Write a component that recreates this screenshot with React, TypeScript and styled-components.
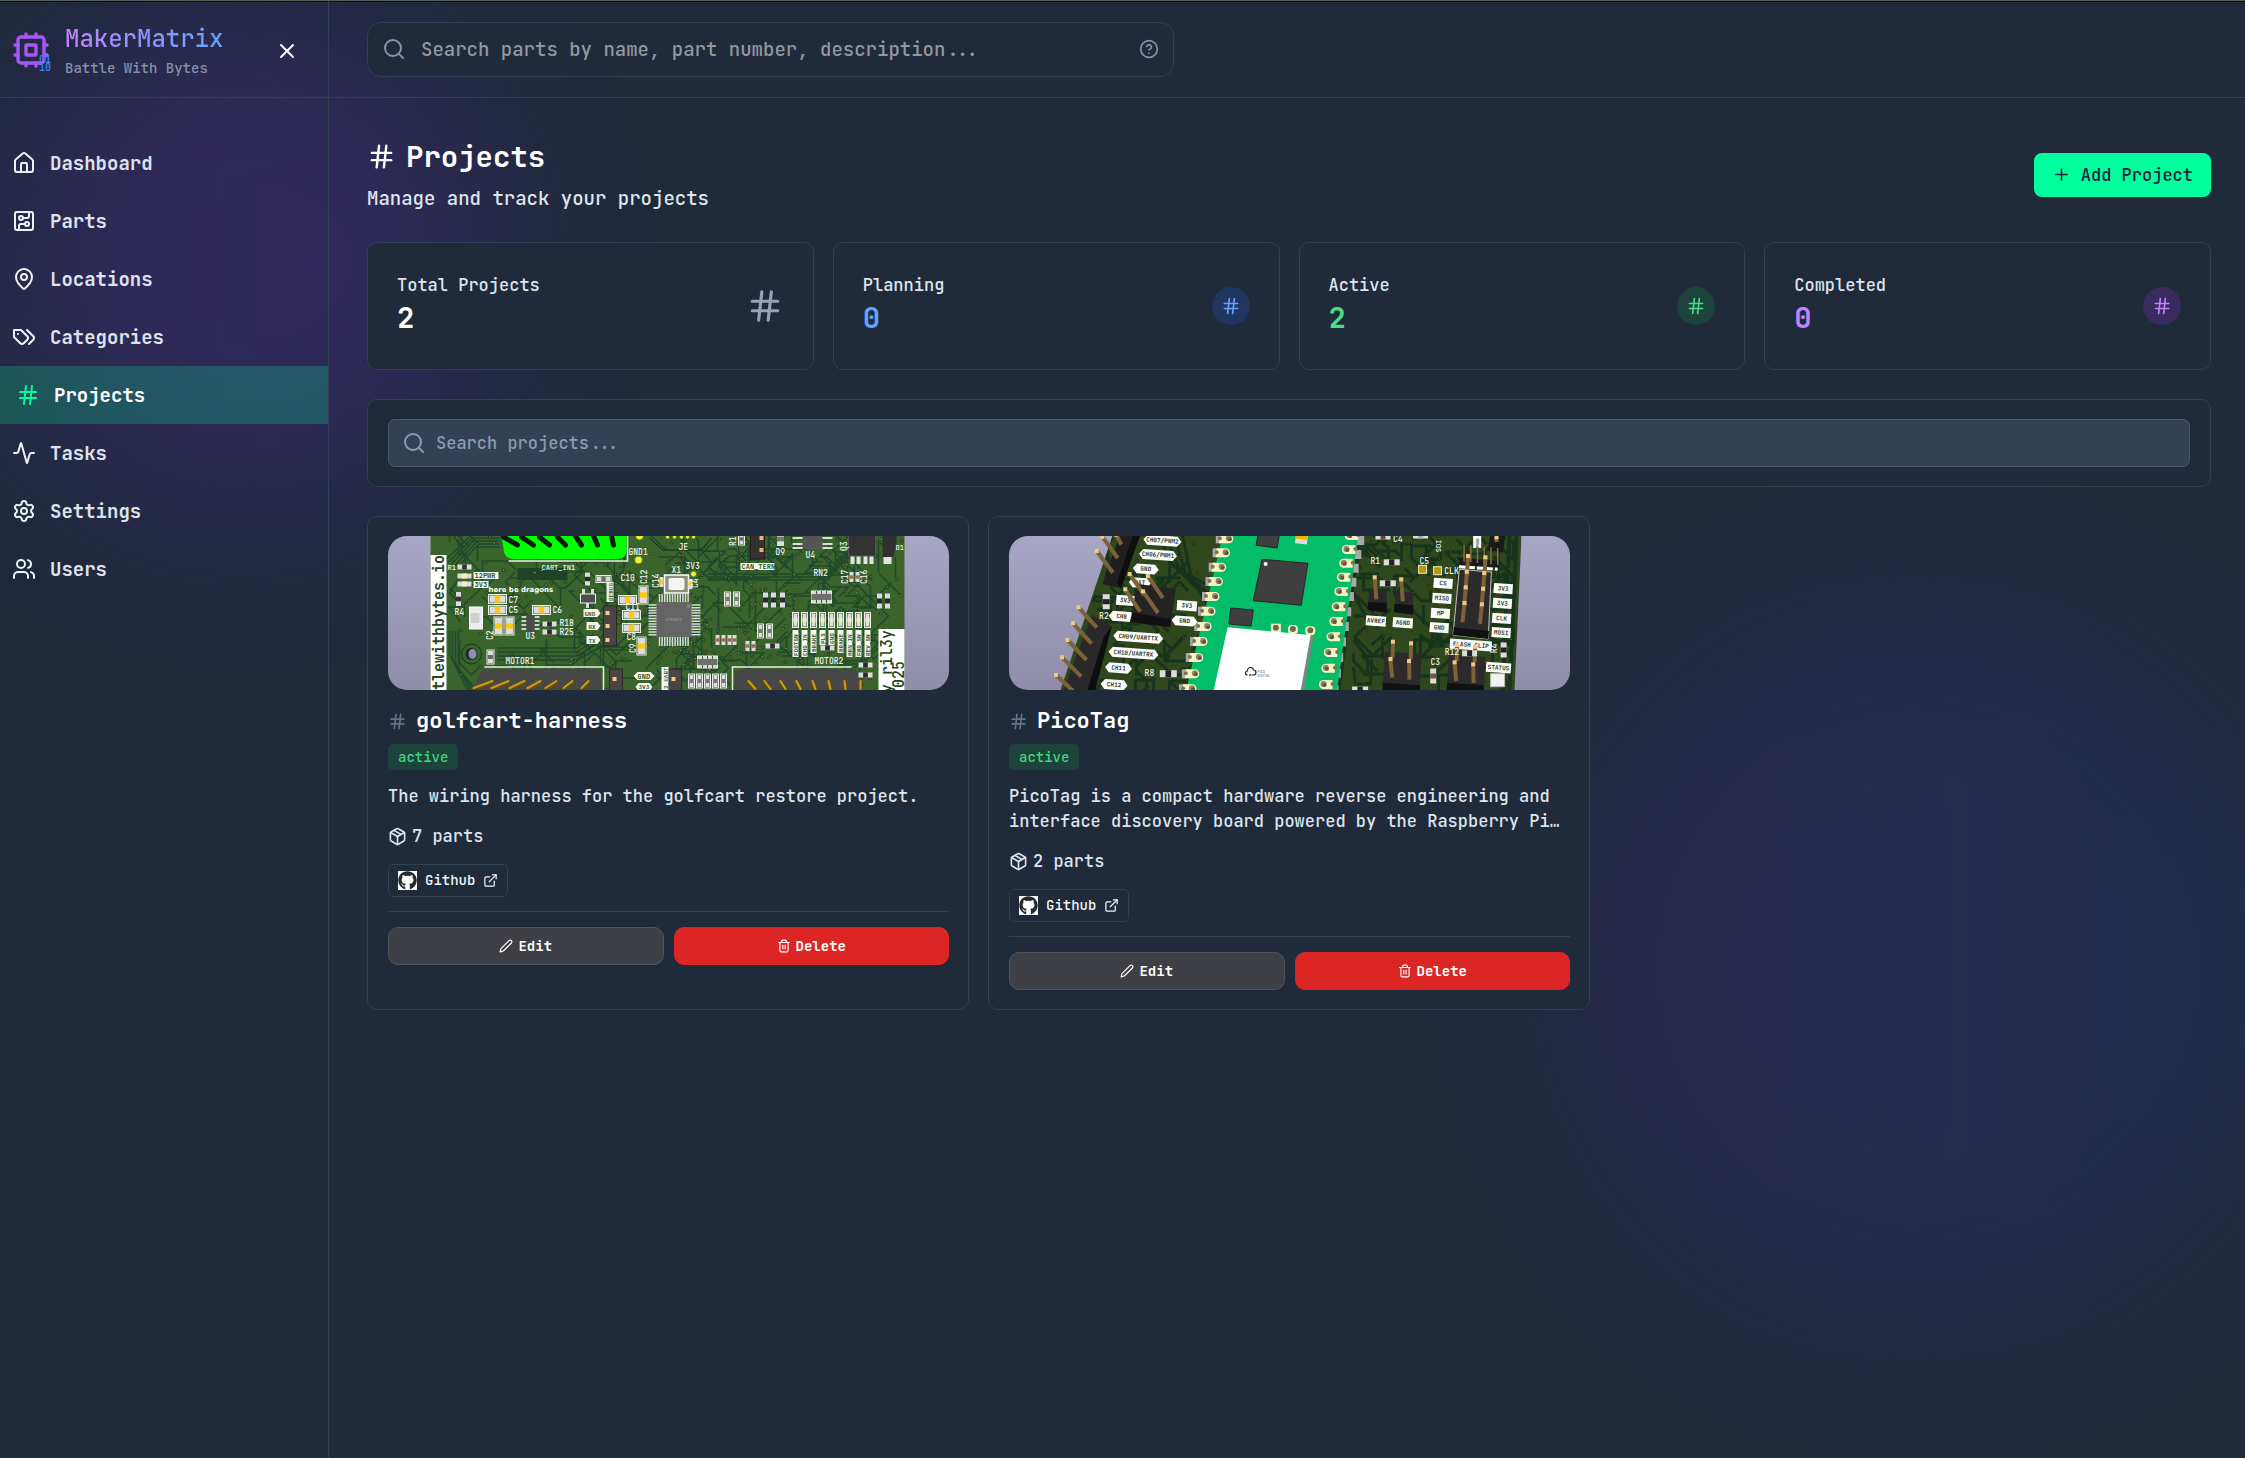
import React from "react";
import styled, { createGlobalStyle } from "styled-components";
import {
  Activity,
  CircuitBoard,
  ExternalLink,
  Hash,
  HelpCircle,
  House,
  MapPin,
  Package,
  Pen,
  Plus,
  Search,
  Settings,
  Trash2,
  Users,
  X,
} from "lucide-react";
import { FaGithub } from "react-icons/fa";

const mono = `"JetBrains Mono", "DejaVu Sans Mono", "Liberation Mono", monospace`;

const GlobalStyle = createGlobalStyle`
  *, *::before, *::after { box-sizing: border-box; }
  body {
    margin: 0;
    background: #1f2a3b;
    color: #dfe5ec;
    font-family: ${mono};
    font-size: 17px;
    font-weight: 500;
    line-height: 25px;
  }
  h1, h2, p, dl, dd, dt, ul { margin: 0; padding: 0; }
  button, input { font-family: inherit; font-weight: inherit; }
  button { cursor: pointer; }
  svg { flex: none; display: block; }
`;

/* ---------- page frame ---------- */

const Shell = styled.div`
  position: relative;
  isolation: isolate;
  display: grid;
  grid-template-columns: 329px minmax(0, 1fr);
  min-height: 100vh;
  border-top: 1px solid #5a5a56;
  box-shadow: inset 0 1px 0 #05080c;
  overflow: hidden;
`;

const Glow = styled.div<{ $size: number; $from: string; $to: string }>`
  position: absolute;
  z-index: -1;
  width: ${(p) => p.$size}px;
  height: ${(p) => p.$size}px;
  border-radius: 50%;
  background: linear-gradient(90deg, ${(p) => p.$from}, ${(p) => p.$to});
  filter: blur(77px);
`;

const TopGlow = styled(Glow)`
  top: 10px;
  left: -10px;
`;

const BottomGlow = styled(Glow)`
  right: -20px;
  bottom: 150px;
`;

const Sidebar = styled.aside`
  border-right: 1px solid #2f4152;
`;

const Brand = styled.div`
  display: flex;
  align-items: center;
  height: 97px;
  padding: 3px 29px 0 12px;
  border-bottom: 1px solid #2f4152;
`;

const LogoMark = styled.svg`
  width: 42px;
  height: 42px;
  overflow: visible;
`;

const BrandText = styled.div`
  flex: 1;
  padding-left: 11px;
`;

const BrandName = styled.div`
  width: max-content;
  font-size: 24px;
  line-height: 34px;
  color: transparent;
  background: linear-gradient(90deg, #c084fc, #60a5fa);
  background-clip: text;
  -webkit-background-clip: text;
`;

const BrandTag = styled.div`
  font-size: 14px;
  line-height: 24px;
  color: #8492aa;
`;

const IconButton = styled.button`
  display: flex;
  padding: 0;
  border: 0;
  background: none;
  color: ${(p) => p.color || "#fff"};
`;

const Nav = styled.nav`
  display: grid;
  padding-top: 36px;
`;

const NavLink = styled.a<{ $active?: boolean }>`
  display: flex;
  align-items: center;
  gap: 14px;
  height: 58px;
  padding-left: ${(p) => (p.$active ? 16 : 12)}px;
  font-size: 19px;
  font-weight: 600;
  text-decoration: none;
  color: ${(p) => (p.$active ? "#fff" : "#dde3ec")};
  background: ${(p) => (p.$active ? "rgba(0, 255, 157, 0.21)" : "none")};
  svg { color: ${(p) => (p.$active ? "#00ff9d" : "#eef2f7")}; }
`;

const TopBar = styled.header`
  display: flex;
  align-items: center;
  height: 97px;
  padding: 0 38px;
  border-bottom: 1px solid #2f4152;
`;

const GlobalSearch = styled.label`
  display: flex;
  align-items: center;
  gap: 15px;
  width: 807px;
  height: 55px;
  padding: 0 14px;
  border: 1px solid #2f4152;
  border-radius: 14px;
  background: #1f2a3b;
  color: #8595aa;
`;

const TextInput = styled.input<{ $size: number; $hint: string }>`
  flex: 1;
  min-width: 0;
  padding: 0;
  border: 0;
  outline: 0;
  background: none;
  color: #fff;
  font-size: ${(p) => p.$size}px;
  &::placeholder { color: ${(p) => p.$hint}; opacity: 1; }
`;

const Content = styled.main`
  display: grid;
  gap: 29px;
  padding: 38px 34px 38px 38px;
`;

/* ---------- page header ---------- */

const PageHead = styled.div`
  display: flex;
  align-items: center;
  justify-content: space-between;
`;

const PageTitle = styled.h1`
  display: flex;
  align-items: center;
  gap: 10px;
  font-size: 29px;
  line-height: 41px;
  font-weight: 600;
  color: #fff;
`;

const PageLead = styled.p`
  margin-top: 8px;
  font-size: 19px;
  line-height: 28px;
`;

const AddButton = styled.button`
  display: flex;
  align-items: center;
  gap: 10px;
  height: 44px;
  padding: 0 18px;
  border: 0;
  border-radius: 8px;
  background: #00ff9d;
  color: #16243a;
  font-size: 17px;
`;

/* ---------- panels ---------- */

const Panel = styled.section`
  border: 1px solid #2f4152;
  border-radius: 10px;
  background: #1f2a3b;
`;

const Stats = styled.div`
  display: grid;
  grid-template-columns: repeat(4, minmax(0, 1fr));
  gap: 19px;
`;

const StatPanel = styled(Panel)`
  display: flex;
  align-items: center;
  justify-content: space-between;
  padding: 30px 29px;
`;

const StatLabel = styled.dt`
  line-height: 24px;
`;

const StatValue = styled.dd<{ $color: string }>`
  font-size: 29px;
  line-height: 42px;
  font-weight: 700;
  color: ${(p) => p.$color};
`;

const StatBadge = styled.div<{ $color: string; $bg: string }>`
  display: grid;
  place-items: center;
  width: 38px;
  height: 38px;
  border-radius: 50%;
  color: ${(p) => p.$color};
  background: ${(p) => p.$bg};
`;

const FilterPanel = styled(Panel)`
  padding: 19px 20px;
`;

const FilterBox = styled.label`
  display: flex;
  align-items: center;
  gap: 10px;
  height: 48px;
  padding: 0 13px;
  border: 1px solid #465a6b;
  border-radius: 7px;
  background: #334154;
  color: #8b9bb1;
`;

/* ---------- project cards ---------- */

const Projects = styled.div`
  display: grid;
  grid-template-columns: repeat(3, minmax(0, 1fr));
  gap: 19px;
`;

const Card = styled(Panel)`
  padding: 19px 19px 19px 20px;
`;

const Cover = styled.svg`
  width: 100%;
  height: 154px;
  border-radius: 19px;
`;

const CardTitle = styled.h2`
  display: flex;
  align-items: center;
  gap: 9px;
  margin-top: 14px;
  font-size: 22px;
  line-height: 34px;
  font-weight: 600;
  color: #fff;
  svg { color: #64758b; }
`;

const Status = styled.span`
  display: block;
  width: max-content;
  margin-top: 6px;
  padding: 0 10px;
  border-radius: 5px;
  font-size: 14px;
  line-height: 26px;
  color: #43d67b;
  background: #1d433d;
`;

const Summary = styled.p`
  display: -webkit-box;
  -webkit-box-orient: vertical;
  -webkit-line-clamp: 2;
  overflow: hidden;
  margin-top: 14px;
`;

const PartCount = styled.div`
  display: flex;
  align-items: center;
  gap: 5px;
  margin-top: 14px;
  line-height: 26px;
`;

const LinkChip = styled.a`
  display: flex;
  align-items: center;
  gap: 8px;
  width: max-content;
  height: 33px;
  margin-top: 15px;
  padding: 0 9px;
  border: 1px solid #2f4152;
  border-radius: 5px;
  font-size: 14px;
  color: #f4f6f9;
  text-decoration: none;
`;

const Favicon = styled.span`
  display: grid;
  place-items: center;
  width: 19px;
  height: 19px;
  background: #fff;
  color: #24292e;
`;

const Actions = styled.div`
  display: grid;
  grid-template-columns: 1fr 1fr;
  gap: 10px;
  margin-top: 14px;
  padding-top: 15px;
  border-top: 1px solid #2f4152;
`;

const ActionButton = styled.button<{ $danger?: boolean }>`
  display: flex;
  align-items: center;
  justify-content: center;
  gap: 5px;
  height: 38px;
  padding: 0;
  border: 1px solid ${(p) => (p.$danger ? "#dc2626" : "#52525b")};
  border-radius: 10px;
  background: ${(p) => (p.$danger ? "#dc2626" : "#3f3f46")};
  color: #fff;
  font-size: 14px;
  font-weight: 700;
`;

/* ---------- board artwork ---------- */

type Pt = [number, number];

const range = (n: number) => Array.from({ length: n }, (_, i) => i);

// Small repeatable generator, so that traces and vias land alike on each paint.
const seeded = (seed: number) => () => {
  seed = (seed * 16807) % 2147483647;
  return seed / 2147483647;
};

const Sky = ({ id }: { id: string }) => (
  <>
    <defs>
      <linearGradient id={id} x1="0" y1="0" x2="0" y2="1">
        <stop offset="0" stopColor="#a7a6c4" />
        <stop offset="1" stopColor="#8f8da9" />
      </linearGradient>
    </defs>
    <rect width="562" height="154" fill={`url(#${id})`} />
  </>
);

const Silk = ({ x, y, s = 8, up, children }: { x: number; y: number; s?: number; up?: boolean; children: string }) => (
  <text
    x={x}
    y={y}
    fontFamily={mono}
    fontSize={s}
    fill="#f2f5ee"
    transform={up ? `rotate(-90 ${x} ${y})` : undefined}
  >
    {children}
  </text>
);

// Two-terminal part centred on x, y: w > h lies flat, h > w stands.
const Chip2 = ({ x, y, w, h, mid, frame }: { x: number; y: number; w: number; h: number; mid: string; frame?: boolean }) => {
  const flat = w > h;
  return (
    <g>
      {frame && <rect x={x - w / 2 - 1} y={y - h / 2 - 1} width={w + 2} height={h + 2} fill="none" stroke="#e9efe6" />}
      <rect x={x - w / 2} y={y - h / 2} width={w} height={h} fill="#dcdcdc" />
      <rect
        x={flat ? x - w / 6 : x - w / 2}
        y={flat ? y - h / 2 : y - h / 6}
        width={flat ? w / 3 : w}
        height={flat ? h : h / 3}
        fill={mid}
      />
    </g>
  );
};

const makeTraces = (seed: number, count: number, x0: number, x1: number) => {
  const next = seeded(seed);
  return range(count).map(() => {
    let x = x0 + next() * (x1 - x0);
    let y = next() * 154;
    let d = `M${x.toFixed(0)} ${y.toFixed(0)}`;
    for (let i = 0; i < 4; i++) {
      const len = 5 + next() * 22;
      const dir = Math.floor(next() * 8) * (Math.PI / 4);
      x = Math.min(x1, Math.max(x0, x + Math.cos(dir) * len));
      y += Math.sin(dir) * len;
      d += `L${x.toFixed(0)} ${y.toFixed(0)}`;
    }
    return d;
  });
};

const makeVias = (seed: number, count: number, x0: number, x1: number): Pt[] => {
  const next = seeded(seed);
  return range(count).map(() => [x0 + next() * (x1 - x0), next() * 154]);
};

const harnessTraces = makeTraces(71, 170, 62, 515);
const harnessVias = makeVias(907, 230, 70, 515);
const denseVias = makeVias(311, 130, 270, 400);

const HarnessBoard = () => (
  <Cover viewBox="0 0 562 154" preserveAspectRatio="xMidYMid slice" role="img" aria-label="golfcart-harness board">
    <Sky id="sky-harness" />
    <rect x="43" width="474" height="154" fill="#3a642c" />
    <g fill="none" stroke="#1f4a2b" strokeWidth="1.5">
      {harnessTraces.map((d, i) => (
        <path key={i} d={d} />
      ))}
      {range(5).map((i) => (
        <path key={i} d={`M${58 + i * 3} ${24 + i * 2}L${84 + i} ${i * 3 - 1}H112`} />
      ))}
      {range(4).map((i) => (
        <path key={i} d={`M${62 + i * 3} 95V${118 + i * 5}L${80 + i * 3} 154`} />
      ))}
      {range(4).map((i) => (
        <path key={i} d={`M110 ${112 + i * 4}H190L${206 + i * 3} ${98 + i * 4}`} />
      ))}
      {range(3).map((i) => (
        <path key={i} d={`M320 ${44 - i * 3}H440L${470 - i * 3} ${10 + i}`} />
      ))}
    </g>
    <rect x="130" y="32" width="50" height="12" fill="#1d4428" />
    {[...harnessVias, ...denseVias].map(([x, y], i) => (
      <circle key={i} cx={x} cy={y} r="1.4" fill={i % 3 ? "#59702f" : "#7d8148"} stroke="#173a22" strokeWidth="0.8" />
    ))}

    <rect x="43" y="19" width="16" height="135" fill="#fff" />
    <text x="56" y="154" fontFamily={mono} fontSize="15" fontWeight="700" fill="#24471f" transform="rotate(-90 56 154)">
      tlewithbytes.io
    </text>
    <rect x="491" y="93" width="26" height="61" fill="#fff" />
    <text x="504" y="157" fontFamily={mono} fontSize="15" fill="#24471f" transform="rotate(-90 504 157)">
      y ril3y
    </text>
    <text x="516" y="152" fontFamily={mono} fontSize="15" fill="#24471f" transform="rotate(-90 516 152)">
      025
    </text>

    <path d="M121 25H240V0" fill="none" stroke="#e9efe6" strokeWidth="1.5" />
    <path d="M114 0H239V14Q239 23 230 23H127Q116 23 116 12Z" fill="#00ff00" />
    <g stroke="#0a1c08" strokeWidth="5" strokeLinecap="round">
      {range(7).map((i) => (
        <path key={i} d={`M${116 + i * 18} ${i < 4 ? 1 : 0}L${130 + i * 16} 9`} />
      ))}
    </g>
    <Silk x={154} y={34} s={7}>CART_IN1</Silk>
    <Silk x={241} y={19}>GND1</Silk>
    <Silk x={298} y={33}>3V3</Silk>
    {[[252, 0, 4], [251, 24, 4], [306, 38, 3], [280, 1, 2], [287, 1, 2], [294, 1, 2], [300, 1, 2], [306, 1, 2]].map(([x, y, r]) => (
      <circle key={`${x}-${y}`} cx={x} cy={y} r={r} fill="#f4f22d" stroke="#4b7a2c" />
    ))}
    <path d="M262 2L275 14H314L324 2" fill="none" stroke="#14241a" />
    <Silk x={291} y={14}>JE</Silk>

    <Silk x={60} y={34} s={7}>R1</Silk>
    <Chip2 x={77} y={31} w={14} h={5} mid="#343434" />
    <Chip2 x={77} y={40} w={14} h={5} mid="#f4efc9" />
    <Chip2 x={77} y={48} w={14} h={5} mid="#f4efc9" />
    <rect x="86" y="36" width="25" height="7" fill="#f4f6f0" />
    <rect x="86" y="45" width="15" height="7" fill="#f4f6f0" />
    <g fontFamily={mono} fontSize="7" fontWeight="700" fill="#2d5225">
      <text x="87" y="42">12PWR</text>
      <text x="87" y="51">3V3</text>
    </g>
    <text x="101" y="56" fontFamily='"DejaVu Sans", sans-serif' fontSize="7" fontWeight="700" fill="#fff">
      here be dragons
    </text>
    <Chip2 x={71} y={63} w={5} h={14} mid="#343434" />
    <Silk x={67} y={79}>R4</Silk>
    <rect x="82" y="71" width="13" height="22" fill="#ececec" stroke="#fff" />
    <rect x="83" y="77" width="9" height="10" fill="#cfcfcf" />

    {([[110, 63], [110, 74], [154, 74], [240, 64], [244, 79], [244, 92]] as Pt[]).map(([x, y]) => (
      <Chip2 key={`${x}-${y}`} x={x} y={y} w={16} h={7} mid="#ffc814" frame />
    ))}
    {([[111, 90], [122, 90], [256, 59], [254, 110]] as Pt[]).map(([x, y]) => (
      <Chip2 key={`${x}-${y}`} x={x} y={y} w={7} h={16} mid="#ffc814" frame />
    ))}
    <Silk x={121} y={67}>C7</Silk>
    <Silk x={121} y={77}>C5</Silk>
    <Silk x={165} y={77}>C6</Silk>
    <Silk x={105} y={104} up>C2</Silk>
    {range(4).map((i) => (
      <g key={i} fill="#cfcfcf">
        <rect x="134" y={80 + i * 4} width="5" height="2" />
        <rect x="147" y={80 + i * 4} width="5" height="2" />
      </g>
    ))}
    <rect x="139" y="79" width="8" height="17" fill="#4b4b4b" />
    <Silk x={138} y={103}>U3</Silk>
    <Chip2 x={162} y={88} w={14} h={5} mid="#2a2a2a" />
    <Chip2 x={162} y={96} w={14} h={5} mid="#2a2a2a" />
    <Silk x={172} y={90}>R18</Silk>
    <Silk x={172} y={99}>R25</Silk>

    <circle cx="84" cy="118" r="10" fill="none" stroke="#16351d" />
    <circle cx="84" cy="118" r="6" fill="#1b2430" />
    <ellipse cx="85" cy="118" rx="4" ry="5" fill="#9290b0" />
    <Chip2 x={103} y={121} w={5} h={12} mid="#6a6a6a" frame />
    <Silk x={118} y={128}>MOTOR1</Silk>
    <Silk x={427} y={128}>MOTOR2</Silk>
    <path d="M97 131H216V154M345 154V131H464" fill="none" stroke="#e9efe6" strokeWidth="1.5" />
    <path d="M86 154L92 138Q94 133 101 133H206Q214 133 214 142V154Z" fill="#474747" />
    <path d="M347 154V142Q348 133 357 133H463Q470 133 472 140L476 154Z" fill="#474747" />
    <g stroke="#6b4d05" strokeWidth="4" strokeLinecap="round">
      {range(7).map((i) => (
        <path key={i} d={`M${86 + i * 18} 153L${105 + i * 16} 146`} />
      ))}
      {range(8).map((i) => (
        <path key={i} d={`M${361 + i * 16} 146L${368 + i * 15} 153`} />
      ))}
    </g>
    <g stroke="#c99b1d" strokeWidth="2" strokeLinecap="round">
      {range(7).map((i) => (
        <path key={i} d={`M${86 + i * 18} 152L${105 + i * 16} 145`} />
      ))}
      {range(8).map((i) => (
        <path key={i} d={`M${361 + i * 16} 145L${368 + i * 15} 153`} />
      ))}
    </g>

    <Chip2 x={200} y={43} w={5} h={13} mid="#2a2a2a" />
    <Chip2 x={216} y={43} w={13} h={5} mid="#6a6a6a" frame />
    <rect x="193" y="58" width="15" height="9" fill="#4e4e4e" stroke="#e9efe6" />
    <path d="M196 58v-5M205 58v-5M200 67v5" stroke="#dcdcdc" strokeWidth="3" />
    <Silk x={233} y={45}>C10</Silk>
    <Silk x={238} y={74}>C11</Silk>
    <Silk x={239} y={104}>C8</Silk>
    <Silk x={259} y={48} up>C12</Silk>
    <Silk x={248} y={117} up>C9</Silk>
    <rect x="219" y="46" width="7" height="20" fill="#eef1ea" />
    <text x="225" y="65" fontFamily={mono} fontSize="6" fill="#2d5225" transform="rotate(-90 225 65)">
      DEBUG
    </text>
    <rect x="216" y="70" width="13" height="40" fill="#4b4344" stroke="#2b2627" />
    {[77, 90, 104].map((y, i) => (
      <g key={y}>
        <rect x="218" y={y - 2} width="4" height="4" fill="#f0cf8e" />
        <path d={`M${i ? 199 : 196} ${y - 4}H210L213 ${y}L210 ${y + 4}H${i ? 199 : 196}Z`} fill="#f4f6f0" />
        <text x={i ? 201 : 197} y={y + 3} fontFamily={mono} fontSize="6" fontWeight="700" fill="#2d5225">
          {["GND", "RX", "TX"][i]}
        </text>
      </g>
    ))}

    <g stroke="#d9dcd8" strokeWidth="1.5">
      {range(12).map((i) => (
        <path key={i} d={`M${272 + i * 2.6} 58v52M261 ${69 + i * 2.7}h52`} />
      ))}
    </g>
    <rect x="269" y="66" width="35" height="35" fill="#656565" />
    <circle cx="301" cy="70" r="1.5" fill="#8f8f8f" />
    <text x="278" y="85" fontFamily={mono} fontSize="3" fill="#999">
      ATMEGA328
    </text>
    <rect x="277" y="39" width="24" height="18" fill="#8f8f80" stroke="#fff" strokeWidth="1.5" />
    <rect x="281" y="42" width="16" height="12" rx="2" fill="#f4f4f2" />
    <Silk x={284} y={37}>X1</Silk>
    <Chip2 x={303} y={48} w={4} h={10} mid="#ffc814" />
    <Chip2 x={274} y={46} w={4} h={10} mid="#ffc814" />
    <Silk x={310} y={52} up>C4</Silk>
    <Silk x={271} y={52} up>C14</Silk>

    <Silk x={348} y={10} up>R1</Silk>
    <Chip2 x={354} y={3} w={4} h={10} mid="#6a6a6a" frame />
    <rect x="363" y="-2" width="14" height="25" fill="#383132" stroke="#221d1e" />
    <rect x="372" y="0" width="4" height="4" fill="#f0b56a" />
    <rect x="372" y="12" width="4" height="4" fill="#f0b56a" />
    <Chip2 x={393} y={3} w={7} h={14} mid="#777" />
    <Silk x={388} y={19}>D9</Silk>
    <path d="M405 2h40M405 8h40M405 12h40" stroke="#dcdcdc" strokeWidth="2" />
    <rect x="415" y="-2" width="20" height="15" fill="#555" />
    <Silk x={418} y={22}>U4</Silk>
    <path d="M465 28v-8M471 28v-8M478 28v-8M484 28v-8" stroke="#e2e2e2" strokeWidth="4" />
    <rect x="461" y="-2" width="27" height="22" fill="#333" stroke="#555" />
    <Silk x={459} y={15} up>Q3</Silk>
    <rect x="496" y="20" width="8" height="8" fill="#e2e2e2" />
    <path d="M495 0V21H505L509 12V0Z" fill="#303030" />
    <Silk x={508} y={14} s={7}>D1</Silk>
    <rect x="353" y="27" width="34" height="7" fill="#f4f6f0" />
    <text x="354" y="33" fontFamily={mono} fontSize="7" fontWeight="700" fill="#2d5225">
      CAN_TERN
    </text>
    <Silk x={426} y={40}>RN2</Silk>
    <Silk x={460} y={48} up>C17</Silk>
    <Silk x={479} y={48} up>C16</Silk>
    {([[464, 41], [470, 41], [330, 104], [336, 104], [342, 104], [347, 104], [360, 110], [366, 110]] as Pt[]).map(([x, y]) => (
      <Chip2 key={`${x}-${y}`} x={x} y={y} w={4} h={10} mid="#9a6a5a" />
    ))}
    {([[424, 55], [310, 120]] as Pt[]).map(([x, y]) => (
      <g key={x}>
        <rect x={x} y={y} width="20" height="12" fill="#d5d8d4" stroke="#e9efe6" />
        <rect x={x} y={y + 3} width="20" height="6" fill="#6f6f6f" />
        <path
          d={`M${x + 5} ${y}v3M${x + 10} ${y}v3M${x + 15} ${y}v3M${x + 5} ${y + 9}v3M${x + 10} ${y + 9}v3M${x + 15} ${y + 9}v3`}
          stroke="#3a642c"
        />
      </g>
    ))}
    {([[340, 63], [349, 63], [373, 95], [382, 95], [304, 145], [312, 145], [320, 145], [328, 145], [336, 145]] as Pt[]).map(([x, y]) => (
      <Chip2 key={`${x}-${y}`} x={x} y={y} w={4} h={12} mid="#777" frame />
    ))}
    {([[378, 64], [386, 64], [395, 64], [492, 65], [500, 65]] as Pt[]).map(([x, y]) => (
      <Chip2 key={`${x}-${y}`} x={x} y={y} w={5} h={15} mid="#2a2a2a" />
    ))}
    {([[385, 110], [440, 112], [478, 129], [478, 139]] as Pt[]).map(([x, y]) => (
      <Chip2 key={`${x}-${y}`} x={x} y={y} w={14} h={5} mid="#2a2a2a" />
    ))}
    {["FOOTSW", "CHG_IN", "BRAKE", "PLS", "GND", "BRAKE", "HRN_IN", "FWD_SW", "REV_SW"].map((t, i) => {
      const x = 408 + i * 9;
      const len = t.length * 4 + 3;
      return (
        <g key={i}>
          <Chip2 x={x} y={84} w={4} h={13} mid="#f1ecd0" frame />
          <rect x={x - 3} y="94" width="6" height={len} fill="#f4f6f0" />
          <text
            x={x + 2}
            y={93 + len}
            fontFamily={mono}
            fontSize="6"
            fontWeight="700"
            fill="#2d5225"
            transform={`rotate(-90 ${x + 2} ${93 + len})`}
          >
            {t}
          </text>
        </g>
      );
    })}
    {[222, 281].map((x) => (
      <g key={x}>
        <rect x={x} y="133" width="13" height="24" fill="#4b4344" stroke="#2b2627" />
        <rect x={x + 3} y="141" width="4" height="4" fill="#f0cf8e" />
      </g>
    ))}
    <path d="M250 136H263L267 140L263 144H250L246 140Z" fill="#f4f6f0" />
    <text x="250" y="143" fontFamily={mono} fontSize="7" fontWeight="700" fill="#2d5225">GND</text>
    <path d="M251 147H262L265 151L262 155H251L248 151Z" fill="#f4f6f0" />
    <text x="251" y="153" fontFamily={mono} fontSize="6" fontWeight="700" fill="#2d5225">3V3</text>
    <rect x="274" y="131" width="7" height="23" fill="#f4f6f0" />
    <text x="280" y="153" fontFamily={mono} fontSize="6" fill="#2d5225" transform="rotate(-90 280 153)">
      2_UART
    </text>
  </Cover>
);

// The tag board is drawn on a 1568 x 540 sheet; these bring its points to the cover.
const sx = (x: number) => Math.round((x * 0.3954 - 28) * 10) / 10;
const sy = (y: number) => Math.round((y / 3 - 16) * 10) / 10;
const poly = (pts: Pt[]) => pts.map(([x, y]) => `${sx(x)},${sy(y)}`).join(" ");

const Pin = ({ a, b }: { a: Pt; b: Pt }) => (
  <g>
    <path d={`M${sx(a[0])} ${sy(a[1])}L${sx(b[0])} ${sy(b[1])}`} stroke="#7c6238" strokeWidth="4" />
    <rect x={sx(a[0]) - 2} y={sy(a[1]) - 2} width="4" height="4" fill="#efca85" />
  </g>
);

const Tag = ({ x, y, w, tip, children }: { x: number; y: number; w: number; tip?: boolean; children: string }) => {
  const cx = sx(x);
  const cy = sy(y);
  const l = cx - w / 2;
  const r = cx + w / 2;
  const d = tip
    ? `M${l} ${cy}L${l + 4} ${cy - 5}H${r - 4}L${r} ${cy}L${r - 4} ${cy + 5}H${l + 4}Z`
    : `M${l} ${cy - 5}H${r}V${cy + 5}H${l}Z`;
  return (
    <g transform={`rotate(4 ${cx} ${cy})`}>
      <path d={d} fill="#fbfbfa" />
      <text x={cx} y={cy + 2} textAnchor="middle" fontFamily={mono} fontSize="6" fontWeight="700" fill="#26341d">
        {children}
      </text>
    </g>
  );
};

const leftPads: Pt[] = [[628, 55], [620, 97], [610, 140], [602, 183], [593, 228], [583, 272], [573, 318], [563, 363], [552, 411], [542, 460], [535, 505]];
const rightPads: Pt[] = [[935, 45], [928, 87], [921, 128], [915, 170], [909, 213], [902, 259], [896, 303], [889, 349], [882, 396], [876, 443], [870, 492]];
const tagTracesLeft = makeTraces(53, 34, 85, 190);
const tagTracesRight = makeTraces(97, 60, 345, 505);
const tagVias = [...makeVias(19, 22, 120, 190), ...makeVias(23, 60, 345, 505)];

const TagBoard = () => (
  <Cover viewBox="0 0 562 154" preserveAspectRatio="xMidYMid slice" role="img" aria-label="PicoTag board">
    <Sky id="sky-tag" />
    <clipPath id="tag-edge">
      <polygon points="104,0 513,0 506,154 52,154" />
    </clipPath>
    <g clipPath="url(#tag-edge)">
      <rect width="562" height="154" fill="#2e471c" />
      <g fill="none" stroke="#17341c" strokeWidth="3" strokeLinejoin="round">
        {[...tagTracesLeft, ...tagTracesRight].map((d, i) => (
          <path key={i} d={d} />
        ))}
        {range(4).map((i) => (
          <path key={i} d={`M${150 + i * 8} 0L${165 + i * 6} ${30 + i * 4}L200 ${50 + i * 7}`} />
        ))}
        <path d="M508 0L501 154M501 0L494 154M350 0L330 154" strokeWidth="4" />
      </g>
      {tagVias.map(([x, y], i) => (
        <circle key={i} cx={x} cy={y} r="1.2" fill="#6b5b1c" stroke="#12260f" strokeWidth="0.8" />
      ))}
    </g>

    <g fill="#a9a9ad">
      {leftPads.map(([x, y]) => (
        <rect key={y} x={sx(x) - 13} y={sy(y) - 4} width="8" height="9" />
      ))}
      {rightPads.map(([x, y]) => (
        <rect key={y} x={sx(x) + 6} y={sy(y) + 1} width="8" height="9" />
      ))}
    </g>
    <polygon points={poly([[612, 48], [955, 48], [902, 510], [520, 510]])} fill="#04bd69" />
    {leftPads.map(([x, y]) => (
      <g key={y}>
        <path d={`M${sx(x) - 9} ${sy(y) - 4}h9a4 4 0 0 1 0 9h-10z`} fill="#f8f2c0" />
        <circle cx={sx(x) - 9} cy={sy(y)} r="2" fill="#787458" />
        <circle cx={sx(x)} cy={sy(y)} r="3" fill="#8d8763" />
        <circle cx={sx(x) + 1} cy={sy(y) + 1} r="2" fill="#5d5844" />
      </g>
    ))}
    {rightPads.map(([x, y]) => (
      <g key={y}>
        <path d={`M${sx(x) + 8} ${sy(y) - 4}h-9a4 4 0 0 0 0 9h9z`} fill="#f8f2c0" />
        <circle cx={sx(x) + 8} cy={sy(y)} r="2" fill="#787458" />
        <circle cx={sx(x) - 1} cy={sy(y)} r="3" fill="#8d8763" />
        <circle cx={sx(x)} cy={sy(y) + 1} r="2" fill="#5d5844" />
      </g>
    ))}
    <polygon points={poly([[712, 118], [828, 130], [811, 256], [690, 242]])} fill="#3f3f3f" stroke="#262626" />
    <circle cx={sx(721)} cy={sy(132)} r="2" fill="#fff" />
    <polygon points={poly([[633, 264], [690, 270], [684, 318], [628, 312]])} fill="#3f3f3f" stroke="#262626" />
    <polygon points={poly([[702, 40], [756, 44], [750, 84], [697, 76]])} fill="#3f3f3f" stroke="#262626" />
    <g transform="rotate(6 294 3)">
      <Chip2 x={293} y={1} w={12} h={14} mid="#f0b400" />
    </g>
    {([[747, 323], [790, 327], [834, 331]] as Pt[]).map(([x, y]) => (
      <g key={x}>
        <rect x={sx(x) - 5} y={sy(y) - 4} width="10" height="9" rx={x > 760 ? 4 : 0} fill="#f8f2c0" />
        <circle cx={sx(x)} cy={sy(y)} r="3" fill="#6d6850" />
      </g>
    ))}
    <polygon points={poly([[835, 345], [810, 510], [818, 510], [842, 350]])} fill="#7d8782" />
    <polygon points={poly([[625, 322], [835, 345], [810, 510], [590, 510]])} fill="#fff" />
    <path
      d="M239 139a2 2 0 0 1 0-4a3 3 0 0 1 6-1a2 2 0 0 1 0 5h-2m-2 1l1-2"
      fill="none"
      stroke="#222"
      strokeWidth="1.2"
    />
    <g fontFamily={mono} fontSize="3" fill="#777">
      <text x="249" y="137">PICO</text>
      <text x="249" y="141">DIGITAL</text>
    </g>

    <polygon points={poly([[352, 48], [403, 48], [355, 205], [308, 192], [320, 150]])} fill="#211e20" />
    <polygon points={poly([[385, 48], [403, 48], [355, 205], [345, 190]])} fill="#0f0e0f" />
    <Pin a={[294, 93]} b={[335, 158]} />
    <Pin a={[308, 50]} b={[347, 114]} />
    <Pin a={[343, 44]} b={[356, 74]} />
    <Tag x={460} y={62} w={38} tip>CH07/PWM2</Tag>
    <Tag x={449} y={105} w={38} tip>CH06/PWM1</Tag>
    <Tag x={418} y={147} w={26} tip>GND</Tag>
    <Tag x={403} y={188} w={22} tip>BAT</Tag>
    <Tag x={366} y={241} w={18}>3V3</Tag>
    <Tag x={357} y={289} w={26} tip>CH8</Tag>
    <Tag x={522} y={257} w={20}>3V3</Tag>
    <Tag x={516} y={303} w={26} tip>GND</Tag>
    <Tag x={399} y={352} w={50} tip>CH09/UARTTX</Tag>
    <Tag x={387} y={400} w={50} tip>CH10/UARTRX</Tag>
    <Tag x={349} y={444} w={27} tip>CH11</Tag>
    <Tag x={338} y={494} w={27} tip>CH12</Tag>
    <polygon points={poly([[398, 192], [494, 207], [480, 322], [378, 306]])} fill="#262325" />
    <polygon points={poly([[386, 278], [482, 296], [480, 322], [378, 306]])} fill="#121112" />
    <Pin a={[377, 162]} b={[414, 225]} />
    <Pin a={[423, 168]} b={[461, 234]} />
    <Pin a={[366, 208]} b={[404, 275]} />
    <Pin a={[411, 214]} b={[449, 279]} />
    <polygon points={poly([[282, 285], [332, 318], [290, 510], [210, 510]])} fill="#2b282a" />
    <polygon points={poly([[312, 350], [332, 318], [290, 510], [270, 510]])} fill="#0f0e0f" />
    <Pin a={[248, 262]} b={[294, 323]} />
    <Pin a={[234, 310]} b={[281, 371]} />
    <Pin a={[220, 360]} b={[268, 420]} />
    <Pin a={[206, 412]} b={[255, 470]} />
    <Pin a={[191, 465]} b={[235, 514]} />
    <Chip2 x={sx(318)} y={sy(245)} w={7} h={15} mid="#222" />
    <Chip2 x={sx(475)} y={sy(461)} w={17} h={7} mid="#222" />
    <Silk x={sx(300)} y={sy(297)}>R2</Silk>
    <Silk x={sx(415)} y={sy(467)}>R8</Silk>

    <Chip2 x={sx(1018)} y={0} w={15} h={7} mid="#6c4436" />
    <Silk x={sx(1043)} y={sy(65)}>C4</Silk>
    <Chip2 x={sx(1113)} y={0} w={15} h={5} mid="#aaa" />
    <Silk x={sx(986)} y={sy(132)}>R1</Silk>
    <Chip2 x={sx(1040)} y={sy(127)} w={16} h={6} mid="#222" />
    <Chip2 x={sx(1030)} y={sy(190)} w={16} h={6} mid="#222" />
    <Silk x={sx(1110)} y={sy(132)}>C5</Silk>
    <Silk x={sx(1173)} y={sy(162)}>CLK</Silk>
    <Silk x={sx(1166)} y={sy(97)} s={7} up>SDI</Silk>
    <rect x={sx(1108)} y={sy(136)} width="8" height="8" fill="#b59a10" stroke="#f1edc6" />
    <rect x={sx(1146)} y={sy(140)} width="8" height="8" fill="#b59a10" stroke="#f1edc6" />
    {([[983, 208], [1050, 214]] as Pt[]).map(([x, y]) => (
      <g key={x}>
        <polygon points={poly([[x, y], [x + 44, y + 4], [x + 44, y + 70], [x - 4, y + 62]])} fill="#2a2829" />
        <polygon points={poly([[x - 3, y + 38], [x + 44, y + 42], [x + 44, y + 70], [x - 4, y + 62]])} fill="#121112" />
        <Pin a={[x + 14, y - 36]} b={[x + 18, y + 30]} />
      </g>
    ))}
    <Tag x={1000} y={303} w={20}>AVREF</Tag>
    <Tag x={1068} y={308} w={20}>AGND</Tag>
    <Tag x={1170} y={190} w={19}>CS</Tag>
    <Tag x={1167} y={235} w={19}>MISO</Tag>
    <Tag x={1163} y={280} w={19}>MP</Tag>
    <Tag x={1160} y={323} w={19}>GND</Tag>
    <Tag x={1322} y={206} w={19}>3V3</Tag>
    <Tag x={1320} y={250} w={19}>3V3</Tag>
    <Tag x={1318} y={295} w={19}>CLK</Tag>
    <Tag x={1317} y={338} w={19}>MOSI</Tag>
    <rect x={sx(1246)} y="0" width="8" height="12" fill="#fbfbfa" />
    <text x={sx(1246) + 6} y="12" fontFamily={mono} fontSize="4" fill="#26341d" transform={`rotate(-90 ${sx(1246) + 6} 12)`}>
      PROB
    </text>
    <polygon points={poly([[1289, 48], [1326, 48], [1322, 98], [1283, 90]])} fill="#1b191a" />
    <Pin a={[1305, 52]} b={[1305, 66]} />
    <polygon points={poly([[1210, 112], [1312, 124], [1310, 142], [1210, 136]])} fill="#1b191a" />
    <g stroke="#8b6d3c" strokeWidth="1.5">
      {range(6).map((i) => (
        <path key={i} d={`M${sx(1223 + i * 17)} ${sy(74 + i * 2)}v17`} />
      ))}
    </g>
    <path d={`M${sx(1210)} ${sy(140)}L${sx(1308)} ${sy(148)}`} stroke="#fff" strokeWidth="3" strokeDasharray="7 2" />
    <polygon
      points={poly([[1211, 148], [1292, 156], [1284, 357], [1195, 345]])}
      fill="#2d2a2b"
      stroke="#e6e6e6"
      strokeWidth="0.8"
    />
    <polygon points={poly([[1197, 322], [1286, 333], [1284, 357], [1195, 345]])} fill="#121112" />
    {range(4).map((i) => (
      <g key={i}>
        <Pin a={[1233 - i * 3, 108 + i * 47]} b={[1231 - i * 4, 166 + i * 47]} />
        <Pin a={[1277 - i * 3, 112 + i * 47]} b={[1275 - i * 4, 170 + i * 47]} />
      </g>
    ))}
    <Tag x={1240} y={375} w={42}>FLASH CLIP</Tag>
    {([[1023, 395], [1185, 405]] as Pt[]).map(([x, y]) => (
      <g key={x}>
        <polygon points={poly([[x, y], [x + 92, y + 6], [x + 88, 510], [x - 6, 510]])} fill="#2d2a2b" />
        <polygon points={poly([[x - 4, 488], [x + 88, 496], [x + 88, 510], [x - 6, 510]])} fill="#121112" />
        <Pin a={[x + 20, y - 30]} b={[x + 19, y + 18]} />
        <Pin a={[x + 66, y - 25]} b={[x + 65, y + 22]} />
        <Pin a={[x + 14, y + 22]} b={[x + 18, y + 78]} />
        <Pin a={[x + 61, y + 28]} b={[x + 62, y + 84]} />
      </g>
    ))}
    <Silk x={sx(1174)} y={sy(405)}>R12</Silk>
    <Chip2 x={sx(1237)} y={sy(400)} w={15} h={6} mid="#222" />
    <Silk x={sx(1307)} y={sy(400)} up>R4</Silk>
    <Chip2 x={sx(1323)} y={sy(390)} w={6} h={15} mid="#222" />
    <Silk x={sx(1138)} y={sy(436)}>C3</Silk>
    <Chip2 x={sx(1145)} y={sy(468)} w={6} h={15} mid="#7a5443" />
    <Chip2 x={sx(960)} y={153} w={16} h={5} mid="#222" />
    <Tag x={1310} y={443} w={25}>STATUS</Tag>
    <rect x={sx(1290)} y={sy(461)} width="14" height="13" fill="#f2f2f2" stroke="#bbb" />
  </Cover>
);

/* ---------- icons ---------- */

// Two flat tags, one behind the other.
const TagPair = ({ size }: { size: number }) => (
  <svg
    width={size}
    height={size}
    viewBox="0 0 24 24"
    fill="none"
    stroke="currentColor"
    strokeWidth="2"
    strokeLinecap="round"
    strokeLinejoin="round"
    aria-hidden="true"
  >
    <path d="M9 5H2v7l6.29 6.29c.94.94 2.48.94 3.42 0l3.58-3.58c.94-.94.94-2.48 0-3.42L9 5Z" />
    <path d="M6 9.01V9" />
    <path d="m15 5 6.3 6.3a2.4 2.4 0 0 1 0 3.4L17 19" />
  </svg>
);

const Logo = () => (
  <LogoMark viewBox="0 0 42 42" aria-hidden="true">
    <g fill="none" stroke="#a855f7" strokeWidth="3.4" strokeLinecap="round" strokeLinejoin="round">
      <rect x="6" y="7" width="26" height="26" rx="3" />
      <rect x="14" y="15" width="10" height="10" rx="1" />
      <path d="M14 4v3M24 4v3M14 33v3M24 33v3M3 15h3M3 25h3M32 15h3M32 25h3" />
    </g>
    <g fontFamily={mono} fontSize="10" fontWeight="700" fill="#3b82f6">
      <text x="27" y="33">01</text>
      <text x="27" y="41">10</text>
    </g>
  </LogoMark>
);

/* ---------- data ---------- */

const navItems = [
  { label: "Dashboard", icon: House },
  { label: "Parts", icon: CircuitBoard },
  { label: "Locations", icon: MapPin },
  { label: "Categories", icon: TagPair },
  { label: "Projects", icon: Hash, active: true },
  { label: "Tasks", icon: Activity },
  { label: "Settings", icon: Settings },
  { label: "Users", icon: Users },
];

const stats = [
  { label: "Total Projects", value: 2, color: "#ffffff" },
  { label: "Planning", value: 0, color: "#60a5fa", bg: "#20365f" },
  { label: "Active", value: 2, color: "#4ade80", bg: "#1d433d" },
  { label: "Completed", value: 0, color: "#c084fc", bg: "#382c5e" },
];

const projects = [
  {
    name: "golfcart-harness",
    cover: HarnessBoard,
    text: "The wiring harness for the golfcart restore project.",
    parts: 7,
  },
  {
    name: "PicoTag",
    cover: TagBoard,
    text: "PicoTag is a compact hardware reverse engineering and interface discovery board powered by the Raspberry Pi…",
    parts: 2,
  },
];

export default function App() {
  return (
    <>
      <GlobalStyle />
      <Shell>
        <TopGlow $size={500} $from="rgba(80, 40, 150, 0.3)" $to="rgba(80, 40, 150, 0.38)" />
        <BottomGlow $size={680} $from="rgba(72, 38, 130, 0.32)" $to="rgba(30, 64, 140, 0.26)" />

        <Sidebar>
          <Brand>
            <Logo />
            <BrandText>
              <BrandName>MakerMatrix</BrandName>
              <BrandTag>Battle With Bytes</BrandTag>
            </BrandText>
            <IconButton type="button" aria-label="Close menu">
              <X size={24} />
            </IconButton>
          </Brand>
          <Nav>
            {navItems.map(({ label, icon: Icon, active }) => (
              <NavLink key={label} href="#" $active={active}>
                <Icon size={24} />
                {label}
              </NavLink>
            ))}
          </Nav>
        </Sidebar>

        <div>
          <TopBar>
            <GlobalSearch>
              <Search size={24} />
              <TextInput
                $size={19}
                $hint="#94979f"
                aria-label="Search parts"
                placeholder="Search parts by name, part number, description..."
              />
              <IconButton type="button" color="#8595aa" aria-label="Search help">
                <HelpCircle size={20} />
              </IconButton>
            </GlobalSearch>
          </TopBar>

          <Content>
            <PageHead>
              <div>
                <PageTitle>
                  <Hash size={29} />
                  Projects
                </PageTitle>
                <PageLead>Manage and track your projects</PageLead>
              </div>
              <AddButton type="button">
                <Plus size={19} />
                Add Project
              </AddButton>
            </PageHead>

            <Stats>
              {stats.map((s) => (
                <StatPanel key={s.label}>
                  <dl>
                    <StatLabel>{s.label}</StatLabel>
                    <StatValue $color={s.color}>{s.value}</StatValue>
                  </dl>
                  {s.bg ? (
                    <StatBadge $color={s.color} $bg={s.bg}>
                      <Hash size={20} />
                    </StatBadge>
                  ) : (
                    <Hash size={38} color="#94a3b8" />
                  )}
                </StatPanel>
              ))}
            </Stats>

            <FilterPanel>
              <FilterBox>
                <Search size={24} />
                <TextInput $size={17} $hint="#8b9bb1" aria-label="Search projects" placeholder="Search projects..." />
              </FilterBox>
            </FilterPanel>

            <Projects>
              {projects.map(({ name, cover: Art, text, parts }) => (
                <Card key={name}>
                  <Art />
                  <CardTitle>
                    <Hash size={19} />
                    {name}
                  </CardTitle>
                  <Status>active</Status>
                  <Summary>{text}</Summary>
                  <PartCount>
                    <Package size={19} />
                    {parts} parts
                  </PartCount>
                  <LinkChip href="#">
                    <Favicon>
                      <FaGithub size={19} />
                    </Favicon>
                    Github
                    <ExternalLink size={15} />
                  </LinkChip>
                  <Actions>
                    <ActionButton type="button">
                      <Pen size={14} />
                      Edit
                    </ActionButton>
                    <ActionButton type="button" $danger>
                      <Trash2 size={14} />
                      Delete
                    </ActionButton>
                  </Actions>
                </Card>
              ))}
            </Projects>
          </Content>
        </div>
      </Shell>
    </>
  );
}
